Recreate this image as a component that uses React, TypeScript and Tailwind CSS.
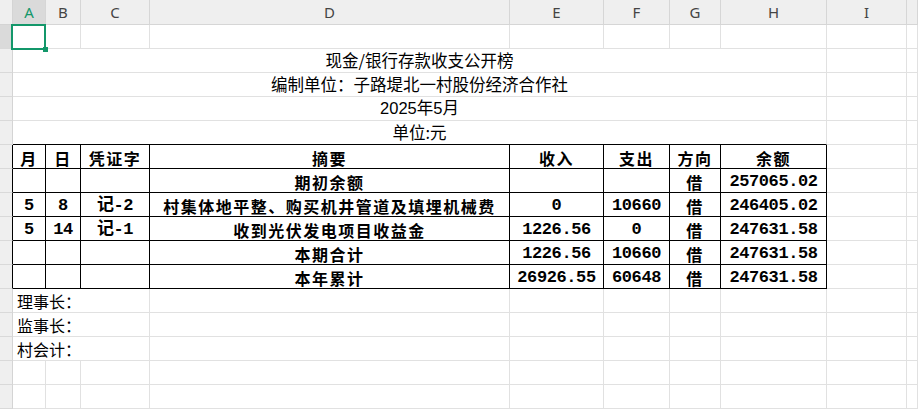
import React from 'react'

// ─── Sheet geometry ─────────────────────────────
const GRID = 'grid grid-cols-[13px_33px_35px_69px_360px_94px_66px_51px_106px_80px_1fr] grid-rows-[25px_repeat(16,24px)]'
const LETTERS = ['A', 'B', 'C', 'D', 'E', 'F', 'G', 'H', 'I', '']

const CJK = "font-['Noto_Sans_CJK_SC','Noto_Sans',sans-serif]"
const NUM = "font-['Liberation_Mono','Noto_Sans_CJK_SC',monospace]"

const TITLES = [
  { text: '现金/银行存款收支公开榜', font: CJK },
  { text: '编制单位：子路堤北一村股份经济合作社', font: CJK },
  { text: '2025年5月', font: "font-['Liberation_Sans','Noto_Sans_CJK_SC',sans-serif]" },
  { text: '单位:元', font: CJK },
]

const TABLE = [
  ['月', '日', '凭证字', '摘要', '收入', '支出', '方向', '余额'],
  ['', '', '', '期初余额', '', '', '借', '257065.02'],
  ['5', '8', '记-2', '村集体地平整、购买机井管道及填埋机械费', '0', '10660', '借', '246405.02'],
  ['5', '14', '记-1', '收到光伏发电项目收益金', '1226.56', '0', '借', '247631.58'],
  ['', '', '', '本期合计', '1226.56', '10660', '借', '247631.58'],
  ['', '', '', '本年累计', '26926.55', '60648', '借', '247631.58'],
]

const SIGNERS = ['理事长：', '监事长：', '村会计：']

function RowHead({ active = false, dark = false }: { active?: boolean; dark?: boolean }) {
  return (
    <div
      className={`border-b border-b-[#d9d9d9] border-r ${dark ? 'border-r-black' : 'border-r-[#d4d4d4]'} ${
        active ? 'bg-[#dadada]' : 'bg-[#efefef]'
      }`}
    />
  )
}

function Blank({ n = 1 }: { n?: number }) {
  return (
    <>
      {Array.from({ length: n }).map((_, i) => (
        <div key={i} className="border-r border-b border-[#e1e1e1] bg-white" />
      ))}
    </>
  )
}

function TableCell({ text }: { text: string }) {
  const isNum = /[0-9]/.test(text)
  return (
    <div
      className={`flex items-center justify-center border-r border-b border-black bg-white font-bold text-black whitespace-nowrap ${
        isNum ? `${NUM} text-[17px] tracking-[-0.4px] pt-[2px]` : `${CJK} text-[16px] tracking-[1.5px] pt-[2px]`
      }`}
    >
      {text}
    </div>
  )
}

export default function App() {
  return (
    <div className={`${GRID} w-[918px] h-[409px] overflow-hidden bg-white`}>
      {/* Column header bar */}
      <div className="bg-[#efefef] border-r border-b border-[#d4d4d4]" />
      {LETTERS.map((l, i) => (
        <div
          key={i}
          className={`flex items-center justify-center border-r border-b border-[#d6d6d6] text-[15px] font-['Noto_Sans',sans-serif] ${
            l === 'A' ? 'bg-[#dadada] text-[#13976a]' : 'bg-[#efefef] text-[#444]'
          }`}
        >
          {l}
        </div>
      ))}

      {/* Row 1 with selected A1 */}
      <RowHead active />
      <div className="relative border-r border-b border-[#e1e1e1] bg-white">
        <div className="absolute -left-[2px] -top-[1px] w-[35px] h-[26px] border-2 border-[#13976a]" />
        <div className="absolute left-[30px] top-[22px] w-[5px] h-[5px] bg-[#13976a]" />
      </div>
      <Blank n={9} />

      {/* Title rows, merged A:H */}
      {TITLES.map((t, i) => (
        <React.Fragment key={t.text}>
          <RowHead />
          <div
            className={`col-span-8 flex items-center justify-center border-b ${
              i === TITLES.length - 1 ? 'border-black' : 'border-[#e1e1e1]'
            } border-r border-r-[#e1e1e1] bg-white text-[16.5px] text-black ${t.font}`}
          >
            {t.text}
          </div>
          <Blank n={2} />
        </React.Fragment>
      ))}

      {/* Ledger table */}
      {TABLE.map((row, r) => (
        <React.Fragment key={r}>
          <RowHead dark />
          {row.map((c, i) => (
            <TableCell key={i} text={c} />
          ))}
          <Blank n={2} />
        </React.Fragment>
      ))}

      {/* Signers, merged A:C */}
      {SIGNERS.map(s => (
        <React.Fragment key={s}>
          <RowHead />
          <div className={`col-span-3 flex items-center pl-[4px] border-r border-b border-[#e1e1e1] bg-white text-[16px] text-black ${CJK}`}>
            {s}
          </div>
          <Blank n={7} />
        </React.Fragment>
      ))}

      {/* Empty rows */}
      {[0, 1].map(r => (
        <React.Fragment key={r}>
          <RowHead />
          <Blank n={10} />
        </React.Fragment>
      ))}
    </div>
  )
}
